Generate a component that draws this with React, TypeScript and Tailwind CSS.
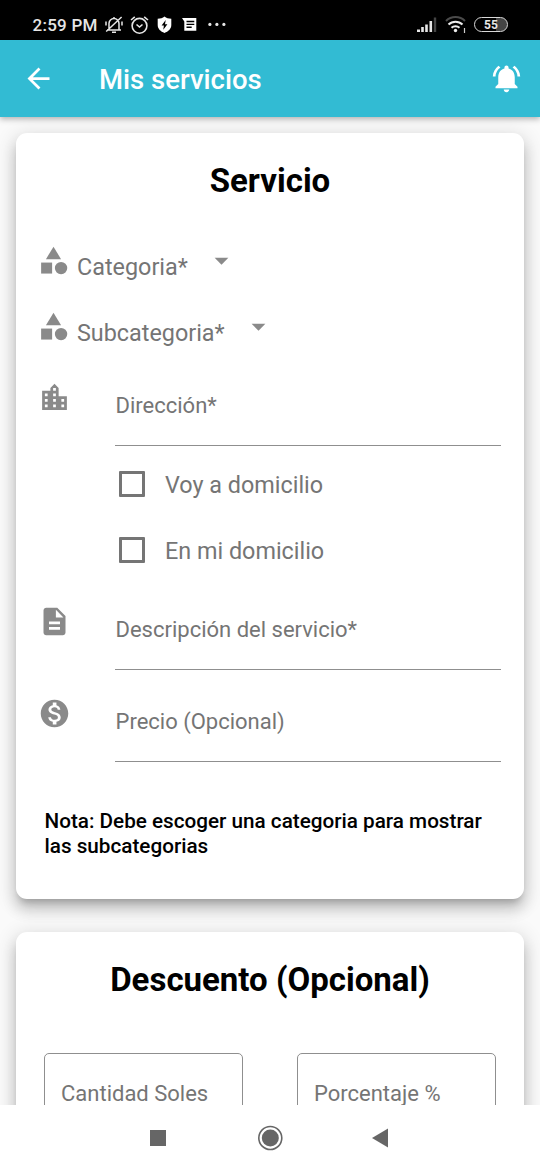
import React from "react";
import {
  MdArrowBack,
  MdArrowDropDown,
  MdCategory,
  MdDescription,
  MdLocationCity,
  MdMonetizationOn,
  MdNotificationsActive,
} from "react-icons/md";

function StatusBar() {
  return (
    <div className="flex h-10 shrink-0 items-center bg-black pt-[9px] pl-[32.5px] text-[#e6e6e6]">
      <span className="w-[72.5px] whitespace-nowrap text-[17px] leading-5 font-medium tracking-[0.25px]">2:59 PM</span>
      <svg className="h-5 w-[18px]" viewBox="0 0 18 20" fill="none" stroke="currentColor" strokeWidth="1.5">
        <path d="M4 14.5V8.5a5 5 0 0 1 10 0v6M2 15h14M7 17.3h4M9 2v1.5M1.2 16.5 16.6 2M1 6.5v4M17 6.5v4" />
      </svg>
      <svg className="ml-[7px] h-5 w-[19px]" viewBox="0 0 18 20" fill="none" stroke="currentColor" strokeWidth="1.6">
        <circle cx="9" cy="10.8" r="7.4" />
        <path d="M.5 5 4.3 1.800M17.500 5l-3.800-3.200M6 9.500l3 2.500 3-2.500" />
      </svg>
      <svg className="ml-2 h-5 w-[15px]" viewBox="0 0 15 20">
        <path d="M7.500 1.500C9.300 3 11.500 3.600 14.300 3.800V10c0 4-3 6.400-6.800 8C3.700 16.400.700 14 .700 10V3.800C3.500 3.600 5.700 3 7.500 1.500z" fill="#fff" />
        <path d="M8.700 5 4.600 10.600h2.300L6.300 14.800l4.100-5.600H8z" fill="#000" />
      </svg>
      <svg className="ml-2.5 h-5 w-4" viewBox="0 0 16 20">
        <path d="M0 3h14.300v12.800H2.300V6.500z" fill="#fff" />
        <path d="M4.500 6.500h7.800M4.500 9.400h7.800M4.500 12.300h5.200" stroke="#000" strokeWidth="1.400" />
      </svg>
      <svg className="ml-[10px] h-5 w-[18px]" viewBox="0 0 18 20" fill="currentColor">
        <circle cx="1.900" cy="9.400" r="1.600" />
        <circle cx="8.900" cy="9.400" r="1.600" />
        <circle cx="15.900" cy="9.400" r="1.600" />
      </svg>
      <svg className="ml-auto h-5 w-5" viewBox="0 0 20 20" fill="#e6e6e6">
        <path d="M0 14.500h3v2.500H0zM4.200 12h2.600v5H4.200zM8.200 9.500h2.600V17H8.200zM12.500 6h2.600V17h-2.600z" />
        <path d="M16.800 2.500h2.400V17h-2.400z" fill="#444" />
      </svg>
      <svg className="ml-2 h-5 w-[22px]" viewBox="0 0 22 20" fill="none" strokeWidth="2">
        <path d="M1 6a13.500 13.500 0 0 1 19 0" stroke="#4a4a4a" />
        <path d="M3.500 9.500a10 10 0 0 1 14 0M6.500 12.800a5.800 5.800 0 0 1 8 0" stroke="#eee" />
        <circle cx="10.500" cy="15.500" r="1.700" fill="#eee" />
        <path d="M19.500 13v5" stroke="#ccc" strokeWidth="1.200" />
      </svg>
      <div className="mr-8 ml-[7px] flex h-[15px] w-[34px] items-center justify-center rounded-full border-[1.5px] border-[#d8d8d8] bg-linear-to-r from-black from-65% to-[#444] to-65% text-[12px] leading-none font-bold">55</div>
    </div>
  );
}

function Dropdown({ label }: { label: string }) {
  return (
    <div className="flex h-[66px] items-start text-[#757575]">
      <MdCategory className="size-[33px] text-[#8a8a8a]" />
      <span className="mt-[9px] ml-[7px] text-[23.375px] leading-7">{label}</span>
      <MdArrowDropDown className="ml-[17.5px] size-[33px] text-[#8a8a8a]" />
    </div>
  );
}

function Field({ icon, label }: { icon: React.ReactNode; label: string }) {
  return (
    <div className="flex h-[65px] text-[#8a8a8a]">
      <div className="w-[78px] shrink-0 pl-px">{icon}</div>
      <div className="flex-1 border-b border-[#8f8f8f] pt-[11px] pl-[0.5px] text-[22px] leading-7 text-[#757575]">
        {label}
      </div>
    </div>
  );
}

function Check({ label }: { label: string }) {
  return (
    <div className="flex h-[66px] items-center pl-[82px]">
      <span className="size-[26px] rounded-[1px] border-[3px] border-[#757575]" />
      <span className="ml-5 pt-px text-[23.375px] leading-7 text-[#757575]">{label}</span>
    </div>
  );
}

function Outlined({ label }: { label: string }) {
  return (
    <div className="h-[83px] w-[199px] rounded-[5px] border border-[#8f8f8f] pt-[26px] pl-4 text-[22px] leading-7 text-[#757575]">
      {label}
    </div>
  );
}

const card =
  "rounded-[11px] bg-white shadow-[0_7px_7px_-4px_rgba(0,0,0,0.2),0_11px_14px_1px_rgba(0,0,0,0.14),0_4px_19px_3px_rgba(0,0,0,0.12)]";

export default function App() {
  return (
    <div className="flex h-[1170px] w-[540px] flex-col overflow-hidden bg-[#fafafa] font-[Roboto,sans-serif]">
      <StatusBar />
      <header className="relative z-10 flex h-[77px] shrink-0 items-center bg-[#32bbd3] text-white shadow-[0_2px_6px_rgba(0,0,0,0.3)]">
        <MdArrowBack className="ml-[22px] size-[33px]" />
        <h1 className="ml-11 pt-0.5 text-[27.5px] leading-8 font-medium">Mis servicios</h1>
        <MdNotificationsActive className="mr-[17px] ml-auto size-[33px]" />
      </header>
      <main className="flex min-h-0 flex-1 flex-col gap-[33px] overflow-hidden px-4 pt-4">
        <section className={card + " h-[766px] w-[508px] shrink-0 pr-[23px] pl-[21px]"}>
          <h2 className="pt-[28px] pl-0.5 text-center text-[33px] leading-10 font-bold">Servicio</h2>
          <div className="mt-[43px]">
            <Dropdown label="Categoria*" />
            <Dropdown label="Subcategoria*" />
          </div>
          <div className="mt-[5px]">
            <Field icon={<MdLocationCity className="size-[33px]" />} label="Dirección*" />
          </div>
          <div className="mt-[5px]">
            <Check label="Voy a domicilio" />
            <Check label="En mi domicilio" />
          </div>
          <div className="mt-[22px] flex flex-col gap-[27px]">
            <Field icon={<MdDescription className="size-[33px]" />} label="Descripción del servicio*" />
            <Field icon={<MdMonetizationOn className="size-[33px]" />} label="Precio (Opcional)" />
          </div>
          <p className="mt-[47px] ml-[7.5px] text-[20.7px] leading-[25px] font-medium">
            Nota: Debe escoger una categoria para mostrar<br />las subcategorias
          </p>
        </section>
        <section className={card + " h-[300px] w-[508px] shrink-0 px-7"}>
          <h2 className="pt-[28px] text-center text-[33px] leading-10 font-bold">Descuento (Opcional)</h2>
          <div className="mt-[53px] flex justify-between">
            <Outlined label="Cantidad Soles" />
            <Outlined label="Porcentaje %" />
          </div>
        </section>
      </main>
      <nav className="relative z-10 flex h-[65px] shrink-0 items-center bg-white text-[#666]">
        <svg className="ml-[149px] size-[18px]" viewBox="0 0 18 18" fill="currentColor">
          <rect x="1" y="1" width="16" height="16" />
        </svg>
        <svg className="ml-[90px] size-[26px]" viewBox="0 0 26 26">
          <circle cx="13.3" cy="13" r="11.5" fill="none" stroke="currentColor" strokeWidth="1.6" />
          <circle cx="13.3" cy="13" r="8.5" fill="currentColor" />
        </svg>
        <svg className="ml-[89px] h-5 w-[17px]" viewBox="0 0 17 20" fill="currentColor">
          <path d="M0 10 16 .5v19z" />
        </svg>
      </nav>
    </div>
  );
}
